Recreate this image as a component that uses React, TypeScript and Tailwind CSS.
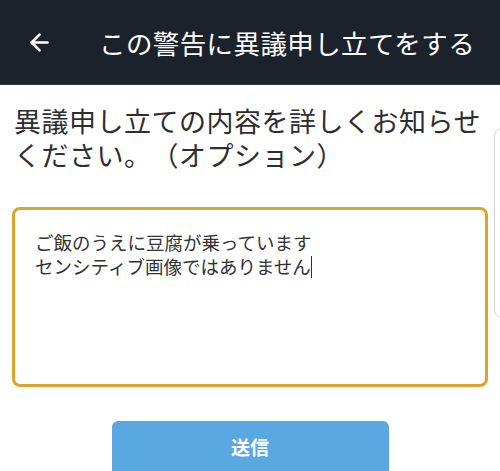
import { ArrowLeft } from "lucide-react";

const jp = "font-['Noto_Sans_CJK_JP','Noto_Sans',sans-serif]";

export default function App() {
  return (
    <div className={`relative w-[500px] h-[471px] overflow-hidden bg-white ${jp}`}>
      <header className="h-[85px] bg-[#1b222c] border-b border-[#2c3a38] flex items-center">
        <button className="w-[78px] h-full flex items-center pl-[26px] text-white">
          <ArrowLeft className="w-[27px] h-[27px]" strokeWidth={2.4} />
        </button>
        <h1 className="ml-[21px] mt-[3px] text-white text-[26.5px] leading-none tracking-[0.4px]">
          この警告に異議申し立てをする
        </h1>
      </header>

      <div className="px-[12px] pt-[19px]">
        <p className="text-[#2e2e2e] text-[27px] leading-[34px] tracking-[0.5px] pl-[2px] [text-spacing-trim:space-all]">
          異議申し立ての内容を詳しくお知らせください。（オプション）
        </p>

        <div className="mt-[35px] w-[476px] h-[180px] rounded-[8px] border-[3px] border-[#dba52b] pl-[20px] pt-[20px]">
          <p className="text-[#333] text-[18.5px] leading-[24px]">
            ご飯のうえに豆腐が乗っています
            <br />
            センシティブ画像ではありません
            <span className="inline-block w-[1.5px] h-[22px] bg-[#333] align-middle -mt-[4px]" />
          </p>
        </div>

        <div className="mt-[34px] flex justify-center">
          <button className="w-[277px] h-[60px] rounded-[6px] bg-[#5aa8e2] text-white text-[19px] font-bold pb-[8px]">
            送信
          </button>
        </div>
      </div>

      {/* edge scroll handle overlay */}
      <div className="absolute left-[494px] top-[128px] w-[20px] h-[190px] rounded-[8px] border border-[#d4d4d4] bg-white" />
    </div>
  );
}
